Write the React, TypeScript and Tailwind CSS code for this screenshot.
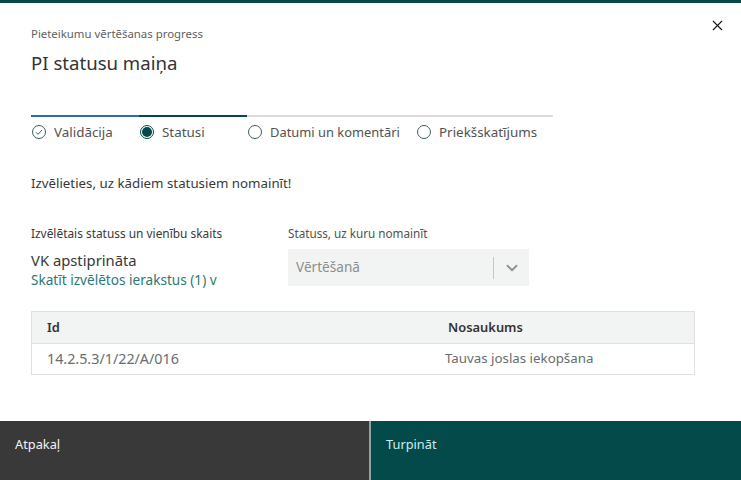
import { X, ChevronDown } from "lucide-react";

const font = "font-['Noto_Sans','Liberation_Sans',sans-serif]";

function CheckIcon() {
    return (
        <svg width="16" height="16" viewBox="0 0 16 16" fill="none" className="shrink-0">
            <circle cx="8" cy="8" r="6.5" stroke="#3f5f60" strokeWidth="1" />
            <path d="M4.9 8.2l2.1 2.1 4.1-4.4" stroke="#3f5f60" strokeWidth="1" />
        </svg>
    );
}

function CurrentIcon() {
    return (
        <svg width="16" height="16" viewBox="0 0 16 16" fill="none" className="shrink-0">
            <circle cx="8" cy="8" r="6.5" stroke="#044a4a" strokeWidth="1" />
            <circle cx="8" cy="8" r="5" fill="#044a4a" />
        </svg>
    );
}

function EmptyIcon() {
    return (
        <svg width="16" height="16" viewBox="0 0 16 16" fill="none" className="shrink-0">
            <circle cx="8" cy="8" r="6.5" stroke="#3f5f60" strokeWidth="1" />
        </svg>
    );
}

export default function App() {
    return (
        <div className={`${font} w-[741px] h-[480px] flex flex-col bg-white text-[#393939] overflow-hidden`}>
            <div className="h-[3px] bg-[#0a4a4d] shrink-0" />

            <div className="relative flex-1 pl-[31px] pr-[46px] pt-[23px]">
                <button className="absolute right-[15px] top-[14px] text-[#161616]">
                    <X size={17} strokeWidth={1.6} />
                </button>

                <p className="text-[11.4px] leading-[16px] text-[#5f5f5f]">Pieteikumu vērtēšanas progress</p>
                <h1 className="mt-[9px] text-[18.6px] leading-[24px] text-[#333]">PI statusu maiņa</h1>

                {/* progress steps */}
                <div className="mt-[40px] flex w-[522px] text-[13.4px] leading-[16px] text-[#525252]">
                    <div className="w-[108px] border-t-2 border-[#2b6cab] pt-[7px] flex items-center gap-[7px]">
                        <CheckIcon />
                        <span>Validācija</span>
                    </div>
                    <div className="w-[108px] border-t-2 border-[#044a4a] pt-[7px] flex items-center gap-[7px]">
                        <CurrentIcon />
                        <span>Statusi</span>
                    </div>
                    <div className="w-[169px] border-t-2 border-[#dcdcdc] pt-[7px] flex items-center gap-[7px]">
                        <EmptyIcon />
                        <span className="text-[12.9px]">Datumi un komentāri</span>
                    </div>
                    <div className="flex-1 border-t-2 border-[#dcdcdc] pt-[7px] flex items-center gap-[7px]">
                        <EmptyIcon />
                        <span>Priekšskatījums</span>
                    </div>
                </div>

                <p className="mt-[34px] text-[13.3px] leading-[18px] text-[#393939]">Izvēlieties, uz kādiem statusiem nomainīt!</p>

                <div className="mt-[33px] flex">
                    <div className="w-[257px]">
                        <p className="text-[11.9px] leading-[16px] text-[#393939]">Izvēlētais statuss un vienību skaits</p>
                        <p className="mt-[9px] text-[14.8px] leading-[20px] text-[#393939]">VK apstiprināta</p>
                        <a className="block mt-[1px] text-[13.6px] leading-[18px] text-[#2a7a75]">Skatīt izvēlētos ierakstus (1) v</a>
                    </div>
                    <div className="w-[241px]">
                        <p className="text-[11.7px] leading-[16px] text-[#525252]">Statuss, uz kuru nomainīt</p>
                        <div className="mt-[8px] h-[37px] bg-[#f2f4f4] flex items-center pl-[8px]">
                            <span className="flex-1 text-[13.6px] text-[#8d8d8d]">Vērtēšanā</span>
                            <span className="w-px h-[22px] bg-[#c6c6c6]" />
                            <span className="w-[35px] flex justify-center text-[#8d9494]">
                                <ChevronDown size={18} strokeWidth={2.5} />
                            </span>
                        </div>
                    </div>
                </div>

                <div className="mt-[22px] w-[664px] border border-[#e0e0e0] text-[13.3px]">
                    <div className="h-[32px] bg-[#f2f4f4] border-b border-[#e0e0e0] grid grid-cols-[401px_1fr] items-center font-semibold text-[12.9px] text-[#333]">
                        <span className="pl-[15px]">Id</span>
                        <span className="pl-[15px]">Nosaukums</span>
                    </div>
                    <div className="h-[30px] grid grid-cols-[401px_1fr] items-center text-[#666d6e]">
                        <span className="pl-[15px] text-[14.3px]">14.2.5.3/1/22/A/016</span>
                        <span className="pl-[12px]">Tauvas joslas iekopšana</span>
                    </div>
                </div>
            </div>

            {/* footer buttons */}
            <div className="h-[59px] shrink-0 flex text-[12.8px] leading-[18px]">
                <button className="w-[369px] bg-[#393939] text-[#f4f4f4] text-left pl-[15px] pt-[14px] flex items-start">Atpakaļ</button>
                <div className="w-[2px] bg-[#8fa5a3]" />
                <button className="flex-1 bg-[#044a4a] text-[#c9eeee] pl-[15px] pt-[14px] flex items-start">Turpināt</button>
            </div>
        </div>
    );
}
